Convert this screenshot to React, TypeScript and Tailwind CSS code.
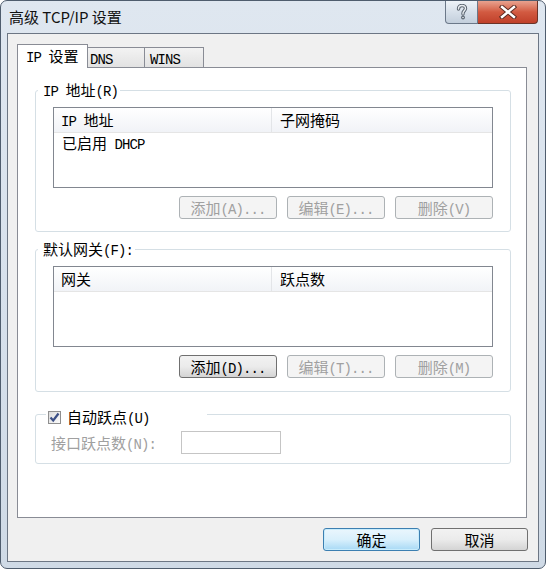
import React from "react";

// SimSun-like text: CJK in Noto Sans CJK at 15px, ASCII runs in a half-width mono
function T({ s }: { s: string }) {
  const parts = s.split(/([\x20-\x7e]+)/).filter((p) => p !== "");
  return (
    <>
      {parts.map((p, i) =>
        /^[\x20-\x7e]+$/.test(p) ? (
          <span key={i} className="font-['Liberation_Mono',monospace] text-[14px] tracking-[-0.9px] leading-none whitespace-pre">
            {p}
          </span>
        ) : (
          <span key={i}>{p}</span>
        )
      )}
    </>
  );
}

function Btn({ label, disabled }: { label: string; disabled?: boolean }) {
  return (
    <button
      className={
        disabled
          ? "w-[98px] h-[23px] rounded-[3px] border border-[#adb2b5] bg-[#f4f4f4] text-[#a0a0a0] leading-[21px]"
          : "w-[98px] h-[23px] rounded-[3px] border border-[#707070] bg-gradient-to-b from-[#f2f2f2] via-[#ebebeb] to-[#d4d4d4] text-black leading-[21px]"
      }
    >
      <T s={label} />
    </button>
  );
}

function ListBox({ col1, col2, rows }: { col1: string; col2: string; rows: string[] }) {
  return (
    <div className="h-[81px] border border-[#828790] bg-white flex flex-col overflow-hidden">
      <div className="h-[25px] shrink-0 flex bg-gradient-to-b from-white to-[#f1f3f7] border-b border-[#e5e5e5]">
        <div className="w-[218px] border-r border-[#e3e5e8] pl-[7px] leading-[23px]">
          <T s={col1} />
        </div>
        <div className="flex-1 pl-[8px] leading-[23px]">
          <T s={col2} />
        </div>
      </div>
      {rows.map((r) => (
        <div key={r} className="pl-[8px] leading-[18px] pt-[1px]">
          <T s={r} />
        </div>
      ))}
    </div>
  );
}

export default function App() {
  return (
    <div className="w-[546px] h-[569px] flex flex-col rounded-[7px] border border-[#4f5d6e] bg-gradient-to-b from-[#dfe7f0] via-[#d7e1ec] to-[#cfdae6] overflow-hidden font-['Noto_Sans_CJK_SC',sans-serif] text-[15px] text-black">
      {/* title bar */}
      <div className="h-[32px] flex items-start shrink-0">
        <div className="pl-[8px] pt-[5px] leading-[22px] text-[15px] text-[#111]">高级 TCP/IP 设置</div>
        <div className="ml-auto mr-[7px] flex">
          <div className="w-[33px] h-[23px] rounded-bl-[4px] border border-t-0 border-[#6b7889] bg-gradient-to-b from-[#eef3f8] via-[#d7e0ea] to-[#c3cfdc] flex items-center justify-center">
            <svg width="12" height="16" viewBox="0 0 12 16">
              <path
                d="M2.5 5 C2.5 2.5 4 1.5 6 1.5 C8.2 1.5 9.5 2.8 9.5 4.6 C9.5 6.4 7 7.2 7 9.2 L7 10"
                fill="none"
                stroke="#5b6570"
                strokeWidth="3.4"
                strokeLinecap="round"
              />
              <path
                d="M2.5 5 C2.5 2.5 4 1.5 6 1.5 C8.2 1.5 9.5 2.8 9.5 4.6 C9.5 6.4 7 7.2 7 9.2 L7 10"
                fill="none"
                stroke="#e9edf1"
                strokeWidth="1.4"
                strokeLinecap="round"
              />
              <circle cx="7" cy="13.5" r="1.9" fill="#5b6570" />
              <circle cx="7" cy="13.5" r="0.8" fill="#e9edf1" />
            </svg>
          </div>
          <div className="w-[60px] h-[23px] rounded-br-[4px] border border-l-0 border-t-0 border-[#6a3328] bg-gradient-to-b from-[#e8a28f] via-[#d25a41] to-[#c0402a] flex items-center justify-center">
            <svg width="20" height="14" viewBox="0 0 20 14">
              <path d="M4 2 L16 12 M16 2 L4 12" stroke="#5a2a22" strokeWidth="4.4" strokeLinecap="square" />
              <path d="M4 2 L16 12 M16 2 L4 12" stroke="#ffffff" strokeWidth="2.4" strokeLinecap="square" />
            </svg>
          </div>
        </div>
      </div>

      {/* client area */}
      <div className="flex-1 mx-[6px] mb-[6px] border border-[#6c7684] bg-[#f0f0f0] flex flex-col">
        {/* tabs */}
        <div className="flex items-end pl-[9px] pt-[10px] h-[33px] shrink-0">
          <div className="relative z-10 -mb-px w-[71px] h-[24px] bg-white border border-b-0 border-[#898c95] pl-[8px] leading-[22px]">
            <T s="IP 设置" />
          </div>
          <div className="w-[57px] h-[20px] border-t border-r border-[#898c95] bg-gradient-to-b from-[#f3f3f3] to-[#e2e2e2] pl-[2px] leading-[19px]">
            <T s="DNS" />
          </div>
          <div className="w-[59px] h-[20px] border-t border-r border-[#898c95] bg-gradient-to-b from-[#f3f3f3] to-[#e2e2e2] pl-[5px] leading-[19px]">
            <T s="WINS" />
          </div>
        </div>

        {/* tab panel */}
        <div className="ml-[9px] mr-[11px] h-[451px] bg-white border border-[#898c95] pl-[17px] pr-[15px] pt-[12px] flex flex-col">
          <fieldset className="border border-[#d5dfe5] rounded-[3px] pl-[17px] pr-[17px] pt-[7px] pb-[12px]">
            <legend className="ml-[-15px] pl-[5px] pr-[2px] h-[20px] leading-[20px]">
              <T s="IP 地址(R)" />
            </legend>
            <ListBox col1="IP 地址" col2="子网掩码" rows={["已启用 DHCP"]} />
            <div className="flex justify-end gap-[10px] mt-[8px]">
              <Btn label="添加(A)..." disabled />
              <Btn label="编辑(E)..." disabled />
              <Btn label="删除(V)" disabled />
            </div>
          </fieldset>

          <fieldset className="mt-[7px] border border-[#d5dfe5] rounded-[3px] pl-[17px] pr-[17px] pt-[7px] pb-[13px]">
            <legend className="ml-[-15px] pl-[5px] pr-[2px] h-[20px] leading-[20px]">
              <T s="默认网关(F):" />
            </legend>
            <ListBox col1="网关" col2="跃点数" rows={[]} />
            <div className="flex justify-end gap-[10px] mt-[8px]">
              <Btn label="添加(D)..." />
              <Btn label="编辑(T)..." disabled />
              <Btn label="删除(M)" disabled />
            </div>
          </fieldset>

          <fieldset className="mt-[9px] border border-[#d5dfe5] rounded-[3px] pl-[15px] pr-[17px] pt-[4px] pb-[9px]">
            <legend className="ml-[-5px] w-[161px] pl-[2px] pt-[6px] h-[26px] leading-[20px] flex items-center gap-[6px]">
              <span className="w-[13px] h-[13px] border border-[#8f8f8f] bg-gradient-to-br from-[#dcdcdc] to-[#fbfbfb] flex items-center justify-center">
                <svg width="11" height="11" viewBox="0 0 11 11">
                  <path d="M1.5 5.5 L4.2 8.5 L9.5 1.5" fill="none" stroke="#3b4f86" strokeWidth="2.2" />
                </svg>
              </span>
              <span>
                <T s="自动跃点(U)" />
              </span>
            </legend>
            <div className="flex items-center">
              <div className="w-[130px] text-[#a0a0a0] leading-[20px]">
                <T s="接口跃点数(N):" />
              </div>
              <div className="w-[100px] h-[23px] border border-[#c5c5c5] bg-white" />
            </div>
          </fieldset>
        </div>

        {/* dialog buttons */}
        <div className="flex justify-end gap-[11px] mt-[10px] mr-[10px]">
          <button className="w-[97px] h-[23px] rounded-[3px] border border-[#3c7fb1] bg-gradient-to-b from-[#eaf6fd] via-[#d9f0fc] to-[#a7d9f5] leading-[21px] shadow-[inset_0_0_0_1px_#c8ecfc]">
            确定
          </button>
          <button className="w-[97px] h-[23px] rounded-[3px] border border-[#707070] bg-gradient-to-b from-[#f2f2f2] via-[#ebebeb] to-[#d4d4d4] leading-[21px]">
            取消
          </button>
        </div>
      </div>
    </div>
  );
}
